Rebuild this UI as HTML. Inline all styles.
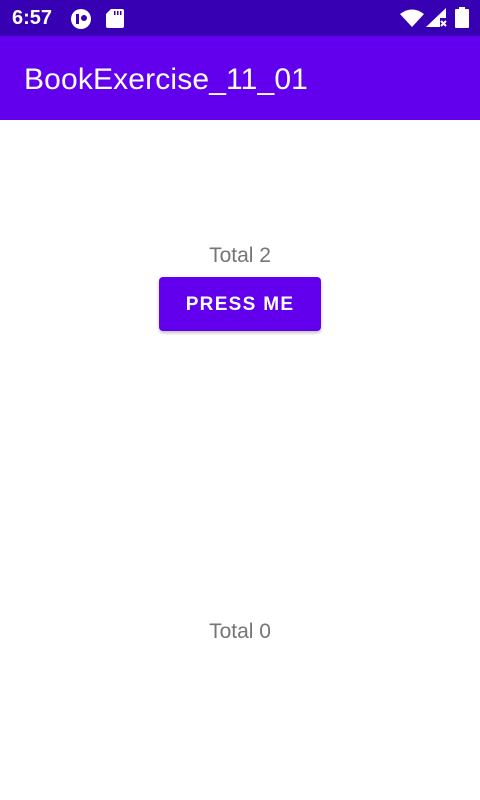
<!DOCTYPE html>
<html><head><style>
body{margin:0;width:480px;height:800px;background:#fff;font-family:"Liberation Sans",sans-serif;position:relative;overflow:hidden}
.sb{position:absolute;top:0;left:0;width:480px;height:36px;background:#3700b3;color:#fff}
.ab{position:absolute;top:36px;left:0;width:480px;height:84px;background:#6200ee;color:#fff}
.t{position:absolute;left:0;width:480px;text-align:center;color:#757575;font-size:21px}
.btn{position:absolute;left:159px;top:277px;width:162px;height:54px;background:#6200ee;border-radius:4px;color:#fff;font-size:19px;font-weight:bold;letter-spacing:1.3px;text-align:center;line-height:56px;box-shadow:0 2px 3px rgba(0,0,0,.25)}
</style></head><body>
<div class="sb">
<span style="position:absolute;left:12px;top:7px;font-size:20px;font-weight:bold">6:57</span>
<svg style="position:absolute;left:70px;top:8px" width="22" height="22" viewBox="0 0 22 22"><circle cx="11" cy="11" r="10" fill="#fff"/><rect x="6" y="6" width="3" height="10" fill="#3700b3"/><circle cx="14" cy="10" r="3" fill="#3700b3"/></svg>
<svg style="position:absolute;left:106px;top:9px" width="18" height="19" viewBox="0 0 18 19"><path d="M5 0H16a2 2 0 0 1 2 2V17a2 2 0 0 1-2 2H2a2 2 0 0 1-2-2V5Z" fill="#fff"/><rect x="8" y="2" width="1.5" height="4" fill="#3700b3"/><rect x="11" y="2" width="1.5" height="4" fill="#3700b3"/><rect x="14" y="2" width="1.5" height="4" fill="#3700b3"/></svg>
<svg style="position:absolute;left:400px;top:9px" width="24" height="18" viewBox="0 0 24 18"><path d="M0 5Q12-4 24 5L12 18Z" fill="#fff"/></svg>
<svg style="position:absolute;left:426px;top:8px" width="22" height="20" viewBox="0 0 22 20"><path d="M20 0V10H14V19H0Z" fill="#fff"/><path d="M15 13l5 5M20 13l-5 5" stroke="#fff" stroke-width="2"/></svg>
<svg style="position:absolute;left:455px;top:7px" width="14" height="21" viewBox="0 0 14 21"><rect x="4" y="0" width="6" height="3" fill="#fff"/><rect x="0" y="2" width="14" height="19" rx="1" fill="#fff"/></svg>
</div>
<div class="ab"><span style="position:absolute;left:24px;top:27px;font-size:30px;letter-spacing:0.15px">BookExercise_11_01</span></div>
<div class="t" style="top:244px">Total 2</div>
<div class="btn">PRESS ME</div>
<div class="t" style="top:620px">Total 0</div>
</body></html>
